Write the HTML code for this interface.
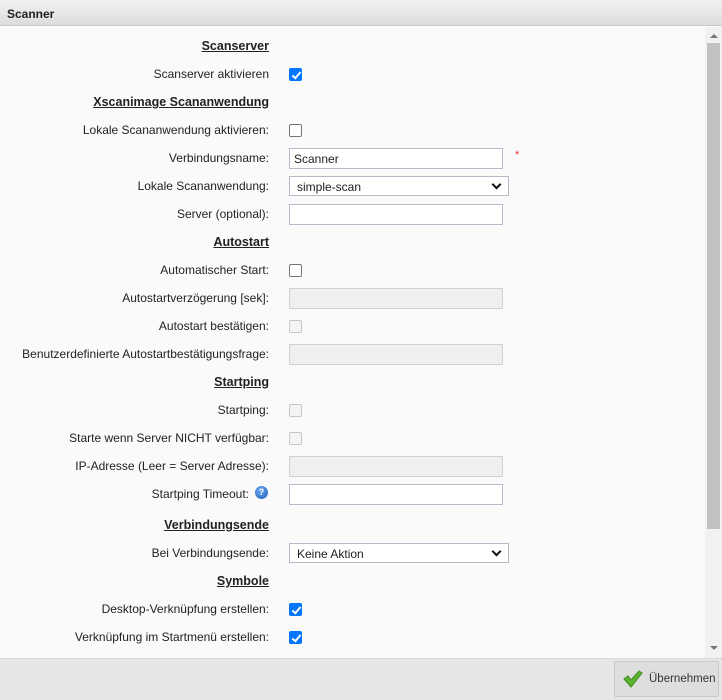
<!DOCTYPE html>
<html><head><meta charset="utf-8"><style>
*{box-sizing:border-box;margin:0;padding:0}
body{width:722px;height:700px;overflow:hidden;background:#fafafa;font-family:"Liberation Sans",Arial,sans-serif;font-size:12px;color:#222;position:relative}
.hdr{position:absolute;left:0;top:0;width:722px;height:26px;background:linear-gradient(#f2f2f2,#dcdcdc);border-bottom:1px solid #c8c8c8;font-weight:bold;font-size:12px;padding:7px 0 0 7px;color:#222}
.lbl{position:absolute;right:453px;white-space:nowrap;text-align:right}
.sec{font-weight:bold;text-decoration:underline;font-size:12.5px}
.cb{position:absolute;left:289px;width:13px;height:13px;border:1px solid #767676;border-radius:2px;background:#fff}
.cb.on{background:#0075ff;border-color:#0075ff}
.cb.dis{border-color:#c6c6c6;background:#f4f4f4}
.cb.on::after{content:"";position:absolute;left:3.5px;top:0.5px;width:3px;height:7px;border:solid #fff;border-width:0 2px 2px 0;transform:rotate(40deg)}
.in{position:absolute;left:289px;width:214px;height:21px;border:1px solid #b8b9c8;background:#fff;padding:3px 0 0 4px}
.in.dis{background:#efefef;border-color:#d0d0d8}
.sel{position:absolute;left:289px;width:220px;height:20px;border:1px solid #b8b9c8;background:#fff;padding:3px 0 0 7px}
.sel::after{content:"";position:absolute;right:8px;top:4px;width:5px;height:5px;border:solid #111;border-width:0 2px 2px 0;transform:rotate(45deg)}
.track{position:absolute;left:705px;top:27px;width:17px;height:631px;background:#f1f1f1}
.thumb{position:absolute;left:707px;top:43px;width:13px;height:486px;background:#c1c1c1}
.foot{position:absolute;left:0;top:658px;width:722px;height:42px;background:#e6e6e6;border-top:1px solid #d8d8d8}
.btn{position:absolute;left:614px;top:661px;width:105px;height:36px;border:1px solid #c9c9c9;background:#dedede;border-radius:2px;padding:11px 0 0 34px;color:#333;font-size:11.5px;white-space:nowrap}
</style></head><body>
<div class="hdr">Scanner</div>

<div class="lbl sec" style="top:39px">Scanserver</div>
<div class="lbl" style="top:67px">Scanserver aktivieren</div><div class="cb on" style="top:68px"></div>
<div class="lbl sec" style="top:95px">Xscanimage Scananwendung</div>
<div class="lbl" style="top:123px">Lokale Scananwendung aktivieren:</div><div class="cb" style="top:124px"></div>
<div class="lbl" style="top:151px">Verbindungsname:</div><div class="in" style="top:148px">Scanner</div>
<div style="position:absolute;left:515px;top:149px;color:#e33;font-size:11px">*</div>
<div class="lbl" style="top:179px">Lokale Scananwendung:</div><div class="sel" style="top:176px">simple-scan</div>
<div class="lbl" style="top:207px">Server (optional):</div><div class="in" style="top:204px"></div>
<div class="lbl sec" style="top:235px">Autostart</div>
<div class="lbl" style="top:263px">Automatischer Start:</div><div class="cb" style="top:264px"></div>
<div class="lbl" style="top:291px">Autostartverzögerung [sek]:</div><div class="in dis" style="top:288px"></div>
<div class="lbl" style="top:319px">Autostart bestätigen:</div><div class="cb dis" style="top:320px"></div>
<div class="lbl" style="top:347px">Benutzerdefinierte Autostartbestätigungsfrage:</div><div class="in dis" style="top:344px"></div>
<div class="lbl sec" style="top:375px">Startping</div>
<div class="lbl" style="top:403px">Startping:</div><div class="cb dis" style="top:404px"></div>
<div class="lbl" style="top:431px">Starte wenn Server NICHT verfügbar:</div><div class="cb dis" style="top:432px"></div>
<div class="lbl" style="top:459px">IP-Adresse (Leer = Server Adresse):</div><div class="in dis" style="top:456px"></div>
<div class="lbl" style="top:487px;right:473px">Startping Timeout:</div>
<div style="position:absolute;left:255px;top:486px;width:13px;height:13px;border-radius:50%;background:radial-gradient(circle at 40% 35%,#6aa8ee,#1f5fb8);color:#fff;font-size:9px;font-weight:bold;text-align:center;line-height:13px">?</div>
<div class="in" style="top:484px"></div>
<div class="lbl sec" style="top:518px">Verbindungsende</div>
<div class="lbl" style="top:546px">Bei Verbindungsende:</div><div class="sel" style="top:543px">Keine Aktion</div>
<div class="lbl sec" style="top:574px">Symbole</div>
<div class="lbl" style="top:602px">Desktop-Verknüpfung erstellen:</div><div class="cb on" style="top:603px"></div>
<div class="lbl" style="top:630px">Verknüpfung im Startmenü erstellen:</div><div class="cb on" style="top:631px"></div>

<div class="track"></div><div class="thumb"></div>
<div style="position:absolute;left:710px;top:34px;border:4px solid transparent;border-bottom:4px solid #777;border-top:0;width:0;height:0;border-left-width:4px;border-right-width:4px"></div>
<div style="position:absolute;left:710px;top:646px;border:4px solid transparent;border-top:4px solid #777;border-bottom:0;width:0;height:0"></div>
<div class="foot"></div>
<div class="btn"><svg style="position:absolute;left:8px;top:8px" width="20" height="18" viewBox="0 0 20 18"><path d="M1 9 L5 6 L8 10 L16 1 L19 3 L8 17 Z" fill="#5cb531" stroke="#3d8a1e" stroke-width="1"/></svg>Übernehmen</div>
</body></html>
